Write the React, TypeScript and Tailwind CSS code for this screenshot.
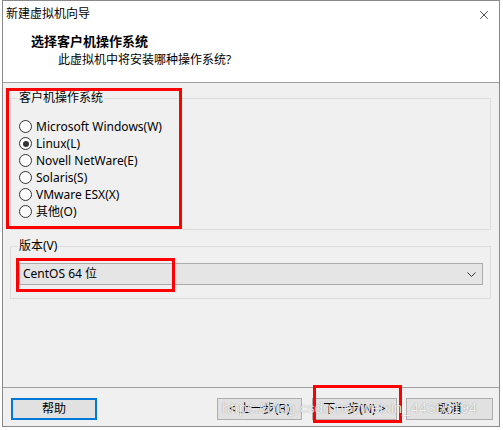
import { X } from "lucide-react";

const systems = [
  { label: "Microsoft Windows(W)", checked: false },
  { label: "Linux(L)", checked: true },
  { label: "Novell NetWare(E)", checked: false },
  { label: "Solaris(S)", checked: false },
  { label: "VMware ESX(X)", checked: false },
  { label: "其他(O)", checked: false },
];

function Radio({ label, checked }: { label: string; checked: boolean }) {
  return (
    <div className="flex h-[17px] items-center">
      <span className="flex size-[13px] items-center justify-center rounded-full border border-[#333] bg-white">
        {checked && <span className="size-[6px] rounded-full bg-[#333]" />}
      </span>
      <span className="ml-[4px] leading-[16px] text-[#000]">{label}</span>
    </div>
  );
}

function Button({ label, width, focused }: { label: string; width: string; focused?: boolean }) {
  return (
    <button
      className={
        focused
          ? "flex h-[22px] items-center justify-center border-2 border-[#0078d7] bg-[#e1e1e1] text-[12px] text-black " + width
          : "flex h-[22px] items-center justify-center border border-[#adadad] bg-[#e1e1e1] text-[12px] text-black " + width
      }
    >
      {label}
    </button>
  );
}

export default function App() {
  return (
    <div className="relative h-[430px] w-[503px] overflow-hidden bg-white font-['Noto_Sans','Noto_Sans_CJK_SC',sans-serif] text-[12px]">
      <div className="ml-[2px] flex h-[427px] w-[498px] flex-col border border-[#8a8a8a] bg-[#f0f0f0]">
        {/* title bar */}
        <div className="flex h-[31px] items-start justify-between bg-white pl-[3px] pr-[8px] pt-[5px]">
          <span className="leading-[16px]">新建虚拟机向导</span>
          <X className="mt-[2px] size-[14px] text-black" strokeWidth={1.2} />
        </div>

        {/* header */}
        <div className="h-[51px] border-b border-[#a0a0a0] bg-white">
          <div className="pl-[28px] text-[13px] font-bold leading-[18px]">选择客户机操作系统</div>
          <div className="mt-[2px] pl-[55px] leading-[16px]">此虚拟机中将安装哪种操作系统?</div>
        </div>

        {/* body */}
        <div className="flex-1 pl-[7px] pr-[8px]">
          <fieldset className="mt-[7px] border border-[#dcdcdc] pb-[9px] pl-[8px] pt-[12px]">
            <legend className="-ml-[1px] px-[1px] leading-[16px]">客户机操作系统</legend>
            {systems.map((s) => (
              <Radio key={s.label} label={s.label} checked={s.checked} />
            ))}
          </fieldset>

          <fieldset className="mt-[8px] border border-[#dcdcdc] pb-[13px] pl-[8px] pr-[7px] pt-[9px]">
            <legend className="-ml-[1px] px-[1px] leading-[16px]">版本(V)</legend>
            <div className="flex h-[22px] items-center justify-between border border-[#adadad] bg-[#e5e5e5] pl-[3px] pr-[6px]">
              <span className="leading-[16px]">CentOS 64 位</span>
              <svg width="9" height="5" viewBox="0 0 9 5" className="text-[#333]">
                <path d="M0.5 0.5 L4.5 4.5 L8.5 0.5" fill="none" stroke="currentColor" strokeWidth="1" />
              </svg>
            </div>
          </fieldset>
        </div>

        {/* footer */}
        <div className="flex h-[39px] items-start justify-between border-t border-[#a0a0a0] pl-[8px] pr-[6px] pt-[10px]">
          <Button label="帮助" width="w-[86px]" focused />
          <div className="flex">
            <Button label="< 上一步(B)" width="w-[85px]" />
            <div className="ml-[10px]">
              <Button label="下一步(N) >" width="w-[85px]" />
            </div>
            <div className="ml-[9px]">
              <Button label="取消" width="w-[87px]" />
            </div>
          </div>
        </div>
      </div>

      {/* annotations */}
      <div className="absolute left-[6px] top-[88px] h-[141px] w-[176px] border-[3px] border-[#ff0000]" />
      <div className="absolute left-[16px] top-[258px] h-[34px] w-[159px] border-[3px] border-[#ff0000]" />
      <div className="absolute left-[313px] top-[385px] h-[38px] w-[89px] border-[3px] border-[#ff0000]" />

      {/* watermark */}
      <div className="pointer-events-none absolute left-[222px] top-[399px] font-['Liberation_Sans',sans-serif] text-[15px] leading-[18px] text-white/85 [text-shadow:0_0_1px_rgba(0,0,0,0.45)]">
        https://blog.csdn.net/weixin_44365194
      </div>
    </div>
  );
}
